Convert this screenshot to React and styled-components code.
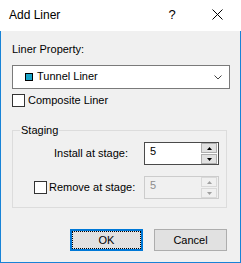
import React from "react";
import styled, { createGlobalStyle } from "styled-components";

const Global = createGlobalStyle`
  html, body { margin: 0; padding: 0; background: #ffffff; }
  body { font-family: "Liberation Sans", Arial, sans-serif; }
  * { box-sizing: border-box; }
`;

const Window = styled.div`
  width: 241px;
  height: 263px;
  display: flex;
  flex-direction: column;
  font-family: "Liberation Sans", Arial, sans-serif;
  color: #000;
`;

const TitleBar = styled.div`
  height: 31px;
  flex: 0 0 31px;
  background: #ffffff;
  display: flex;
  align-items: center;
`;

const Title = styled.div`
  flex: 1;
  padding-left: 9px;
  padding-bottom: 2px;
  font-size: 12px;
  line-height: 14px;
`;

const TitleButton = styled.div`
  width: ${(p) => p.$w}px;
  height: 31px;
  display: flex;
  align-items: center;
  justify-content: center;
  font-size: 13px;
  padding-bottom: 2px;
`;

const Body = styled.div`
  flex: 1;
  background: #f0f0f0;
  border: 1px solid #1883d7;
  border-top: none;
  padding: 11px 0 0 11px;
  display: flex;
  flex-direction: column;
  font-size: 11px;
`;

const Label = styled.div`
  line-height: 14px;
  height: 14px;
`;

const Select = styled.div`
  margin-top: 9px;
  width: 218px;
  height: 24px;
  background: #ffffff;
  border: 1px solid #7a7a7a;
  display: flex;
  align-items: center;
  padding: 0 7px 0 12px;
  gap: 4px;
`;

const Swatch = styled.span`
  width: 8px;
  height: 8px;
  background: ${(p) => p.$color};
  border: 1px solid #000;
  flex: 0 0 8px;
`;

const SelectText = styled.span`
  flex: 1;
  line-height: 13px;
  padding-bottom: 1px;
`;

const CheckRow = styled.label`
  display: flex;
  align-items: center;
  gap: ${(p) => p.$gap || 3}px;
  height: 13px;
  line-height: 13px;
  margin-top: ${(p) => p.$mt || 0}px;
  margin-left: ${(p) => p.$ml || 0}px;
`;

const Box = styled.span`
  width: 13px;
  height: 13px;
  flex: 0 0 13px;
  background: #ffffff;
  border: 1px solid #333333;
`;

const Group = styled.fieldset`
  margin: 17px 0 0 0;
  width: 215px;
  padding: 5px 7px 8px 0;
  border: 1px solid #dcdcdc;
  border-radius: 0;
  min-inline-size: 0;
  display: flex;
  flex-direction: column;
  gap: 11px;
`;

const Legend = styled.legend`
  margin-left: 7px;
  padding: 0 1px;
  font-size: 11px;
  line-height: 13px;
`;

const StageRow = styled.div`
  display: flex;
  align-items: center;
  height: 23px;
  padding-left: ${(p) => p.$pl}px;
`;

const RowLabel = styled.span`
  flex: 1;
  line-height: 13px;
`;

const Spin = styled.div`
  width: 75px;
  height: 23px;
  display: flex;
  border: 1px solid ${(p) => (p.$disabled ? "#cccccc" : "#4a4a4a")};
  background: ${(p) => (p.$disabled ? "#f0f0f0" : "#ffffff")};
  color: ${(p) => (p.$disabled ? "#8d8d8d" : "#000")};
  padding-right: 1px;
`;

const SpinValue = styled.span`
  flex: 1;
  padding: 2px 0 0 5px;
  line-height: 13px;
`;

const SpinButtons = styled.div`
  width: 16px;
  display: flex;
  flex-direction: column;
  gap: 1px;
`;

const SpinButton = styled.div`
  flex: 1;
  border: 1px solid ${(p) => (p.$disabled ? "#d9d9d9" : "#adadad")};
  background: ${(p) => (p.$disabled ? "#f0f0f0" : "#e1e1e1")};
  display: flex;
  align-items: center;
  justify-content: center;
`;

const ButtonRow = styled.div`
  margin-top: 21px;
  display: flex;
  justify-content: flex-end;
  gap: 11px;
  padding-right: 13px;
`;

const Button = styled.button`
  width: 73px;
  height: 22px;
  padding: 0;
  margin: 0;
  font-family: "Liberation Sans", Arial, sans-serif;
  font-size: 11px;
  color: #000;
  background: #e1e1e1;
  border: ${(p) => (p.$default ? "2px solid #0078d7" : "1px solid #adadad")};
  outline: ${(p) => (p.$default ? "1px dotted #000" : "none")};
  outline-offset: -3px;
  display: flex;
  align-items: center;
  justify-content: center;
`;

const Arrow = ({ up, disabled }) => (
  <svg width="5" height="3" viewBox="0 0 5 3">
    <polygon
      points={up ? "2.5,0 5,3 0,3" : "0,0 5,0 2.5,3"}
      fill={disabled ? "#a0a0a0" : "#000"}
    />
  </svg>
);

const SpinBox = ({ value, disabled }) => (
  <Spin $disabled={disabled}>
    <SpinValue>{value}</SpinValue>
    <SpinButtons>
      <SpinButton $disabled={disabled}>
        <Arrow up disabled={disabled} />
      </SpinButton>
      <SpinButton $disabled={disabled}>
        <Arrow disabled={disabled} />
      </SpinButton>
    </SpinButtons>
  </Spin>
);

export default function App() {
  return (
    <>
      <Global />
      <Window>
        <TitleBar>
          <Title>Add Liner</Title>
          <TitleButton $w={44}>?</TitleButton>
          <TitleButton $w={46}>
            <svg width="11" height="11" viewBox="0 0 11 11">
              <path d="M0.5 0.5 L10.5 10.5 M10.5 0.5 L0.5 10.5" stroke="#000" strokeWidth="1" />
            </svg>
          </TitleButton>
          <span style={{ width: 1 }} />
        </TitleBar>
        <Body>
          <Label>Liner Property:</Label>
          <Select>
            <Swatch $color="#1ba6c9" />
            <SelectText>Tunnel Liner</SelectText>
            <svg width="8" height="5" viewBox="0 0 8 5">
              <polyline points="0.5,0.5 4,4 7.5,0.5" fill="none" stroke="#444" strokeWidth="1" />
            </svg>
          </Select>
          <CheckRow $mt={5}>
            <Box />
            <span>Composite Liner</span>
          </CheckRow>
          <Group>
            <Legend>Staging</Legend>
            <StageRow $pl={41}>
              <RowLabel>Install at stage:</RowLabel>
              <SpinBox value="5" />
            </StageRow>
            <StageRow $pl={21}>
              <RowLabel>
                <CheckRow $gap={2}>
                  <Box />
                  <span>Remove at stage:</span>
                </CheckRow>
              </RowLabel>
              <SpinBox value="5" disabled />
            </StageRow>
          </Group>
          <ButtonRow>
            <Button $default>OK</Button>
            <Button>Cancel</Button>
          </ButtonRow>
        </Body>
      </Window>
    </>
  );
}
